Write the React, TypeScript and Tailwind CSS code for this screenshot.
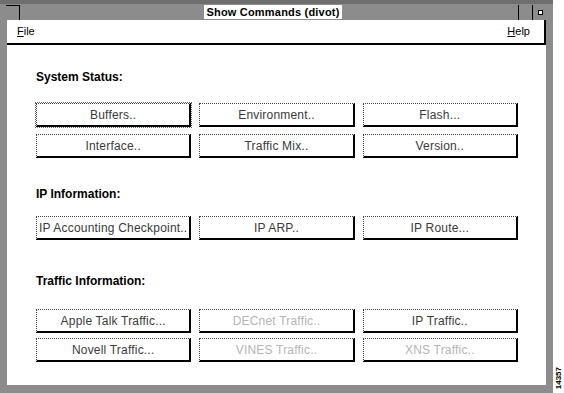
type Cmd = { label: string; disabled?: boolean; focus?: boolean }

function CmdButton({ label, disabled, focus }: Cmd) {
  return (
    <button
      className={
        "h-[24px] bg-white border border-dotted border-[#444] [border-right-style:solid] [border-bottom-style:solid] border-r-2 border-b-2 border-r-black border-b-black text-[12px] tracking-[0.2px] leading-none flex items-center justify-center " +
        (disabled ? "text-[#b4b4b4] " : "text-[#3a3a3a] ") +
        (focus ? "outline outline-1 outline-dotted outline-[#666] outline-offset-0" : "")
      }
    >
      {label}
    </button>
  )
}

function Section({
  title,
  rows,
  titleTop,
  gridTop,
  rowGap,
}: {
  title: string
  rows: Cmd[]
  titleTop: string
  gridTop: string
  rowGap: string
}) {
  return (
    <div>
      <div className={"text-[12px] font-bold leading-[14px] text-black " + titleTop}>{title}</div>
      <div className={"grid grid-cols-3 gap-x-[8px] " + gridTop + " " + rowGap}>
        {rows.map((r) => (
          <CmdButton key={r.label} {...r} />
        ))}
      </div>
    </div>
  )
}

export default function App() {
  return (
    <div
      className="w-[564px] h-[393px] overflow-hidden flex bg-white"
      style={{ fontFamily: '"Liberation Sans", Arial, sans-serif' }}
    >
      {/* window with dithered frame */}
      <div className="w-[553px] h-[393px] flex flex-col bg-[#8c8c8c]">
        {/* title bar */}
        <div className="h-[20px] flex items-center border-t-[4px] border-[#6e6e6e]">
          <div className="ml-[6px] mt-[1px] w-[14px] h-[15px] border-r border-t border-black" />
          <div className="flex-1 flex justify-center">
            <span className="bg-white px-[2px] ml-[8px] text-[11px] font-bold tracking-[0.2px] leading-[14px] text-black">
              Show Commands (divot)
            </span>
          </div>
          <div className="w-[14px] h-[15px] mt-[1px] border-l border-black" />
          <div className="w-[15px] h-[15px] mt-[1px] border-l border-black flex items-center justify-center mr-[6px]">
            <div className="w-[5px] h-[5px] bg-white border border-black" />
          </div>
        </div>

        {/* client area */}
        <div className="flex-1 pl-[7px] pr-[7px] pb-[8px] flex flex-col">
          {/* menubar */}
          <div className="h-[25px] bg-white border-b-2 border-r-2 border-black flex items-center justify-between pl-[10px] pr-[14px] text-[11px] text-black">
            <span>
              <span className="underline">F</span>ile
            </span>
            <span>
              <span className="underline">H</span>elp
            </span>
          </div>

          {/* content */}
          <div className="flex-1 bg-white pl-[29px] pr-[28px]">
            <Section
              title="System Status:"
              titleTop="mt-[25px]"
              gridTop="mt-[19px]"
              rowGap="gap-y-[7px]"
              rows={[
                { label: "Buffers..", focus: true },
                { label: "Environment.." },
                { label: "Flash..." },
                { label: "Interface.." },
                { label: "Traffic Mix.." },
                { label: "Version.." },
              ]}
            />
            <Section
              title="IP Information:"
              titleTop="mt-[29px]"
              gridTop="mt-[15px]"
              rowGap="gap-y-[7px]"
              rows={[
                { label: "IP Accounting Checkpoint.." },
                { label: "IP ARP.." },
                { label: "IP Route..." },
              ]}
            />
            <Section
              title="Traffic Information:"
              titleTop="mt-[34px]"
              gridTop="mt-[21px]"
              rowGap="gap-y-[5px]"
              rows={[
                { label: "Apple Talk Traffic..." },
                { label: "DECnet Traffic..", disabled: true },
                { label: "IP Traffic.." },
                { label: "Novell Traffic..." },
                { label: "VINES Traffic..", disabled: true },
                { label: "XNS Traffic..", disabled: true },
              ]}
            />
          </div>
        </div>
      </div>

      {/* figure number strip */}
      <div className="w-[11px] h-[393px] flex flex-col justify-end items-center pb-[4px]">
        <span className="[writing-mode:vertical-rl] rotate-180 text-[8px] font-bold leading-none text-black">
          14357
        </span>
      </div>
    </div>
  )
}
